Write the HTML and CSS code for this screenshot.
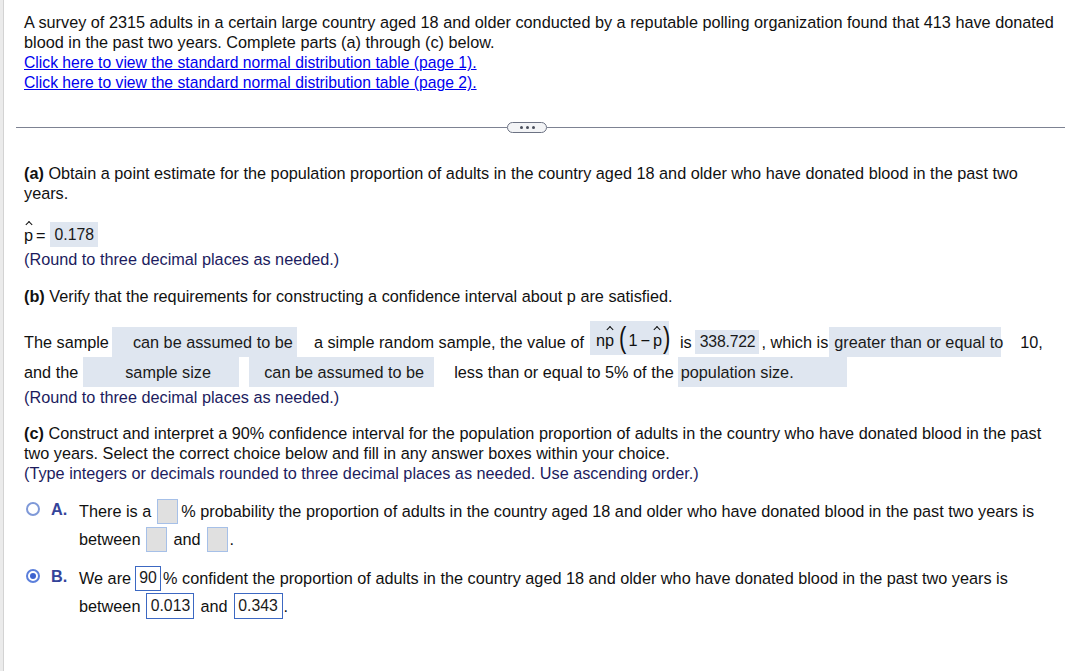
FILE: index.html
```html
<!DOCTYPE html>
<html>
<head>
<meta charset="utf-8">
<link rel="stylesheet" href="styles.css">
</head>
<body>
<div class="page">
  <div class="intro">
    <div class="line">A survey of 2315 adults in a certain large country aged 18 and older conducted by a reputable polling organization found that 413 have donated</div>
    <div class="line">blood in the past two years. Complete parts (a) through (c) below.</div>
    <div class="line"><a href="#">Click here to view the standard normal distribution table (page 1).</a></div>
    <div class="line"><a href="#">Click here to view the standard normal distribution table (page 2).</a></div>
  </div>

  <div class="divider">
    <div class="rule rule-left"></div>
    <div class="pill"><i></i><i></i><i></i></div>
    <div class="rule rule-right"></div>
  </div>

  <div class="part part-a">
    <div class="line"><b>(a)</b> Obtain a point estimate for the population proportion of adults in the country aged 18 and older who have donated blood in the past two</div>
    <div class="line">years.</div>
  </div>
  <div class="ans">
    <span class="hatp">p</span><span class="eq">=</span><span class="fill fill-phat">0.178</span>
  </div>
  <div class="line note note-a">(Round to three decimal places as needed.)</div>

  <div class="part part-b">
    <div class="line"><b>(b)</b> Verify that the requirements for constructing a confidence interval about p are satisfied.</div>
  </div>
  <div class="sentence">
    <div class="srow">
      <span>The sample</span>
      <span class="dd dd-1">can be assumed to be</span>
      <span class="t-1">a simple random sample, the value of</span>
      <span class="formula"><span>n</span><span class="hatp">p</span><span class="paren po">(</span><span>1</span><span class="minus">−</span><span class="hatp">p</span><span class="paren pc">)</span></span>
      <span class="t-is">is</span>
      <span class="fill fill-num">338.722</span>
      <span class="t-which">, which is</span>
      <span class="dd dd-3">greater than or equal to</span>
      <span class="t-10">10,</span>
    </div>
    <div class="srow">
      <span>and the</span>
      <span class="dd dd-4">sample size</span>
      <span class="dd dd-5">can be assumed to be</span>
      <span class="t-less">less than or equal to 5% of the</span>
      <span class="dd dd-6">population size.</span>
    </div>
  </div>
  <div class="line note">(Round to three decimal places as needed.)</div>

  <div class="part part-c">
    <div class="line"><b>(c)</b> Construct and interpret a 90% confidence interval for the population proportion of adults in the country who have donated blood in the past</div>
    <div class="line">two years. Select the correct choice below and fill in any answer boxes within your choice.</div>
    <div class="line note">(Type integers or decimals rounded to three decimal places as needed. Use ascending order.)</div>
  </div>

  <div class="option option-a">
    <span class="radio"></span>
    <span class="olabel">A.</span>
    <div class="otext">
      <div class="orow">There is a<span class="box box-empty box-a1"></span>% probability the proportion of adults in the country aged 18 and older who have donated blood in the past two years is</div>
      <div class="orow">between<span class="box box-empty box-a2"></span>and<span class="box box-empty box-a3"></span>.</div>
    </div>
  </div>

  <div class="option option-b">
    <span class="radio radio-on"></span>
    <span class="olabel">B.</span>
    <div class="otext">
      <div class="orow">We are<span class="box box-filled box-b1">90</span>% confident the proportion of adults in the country aged 18 and older who have donated blood in the past two years is</div>
      <div class="orow">between<span class="box box-filled box-b2">0.013</span>and<span class="box box-filled box-b3">0.343</span>.</div>
    </div>
  </div>
</div>
</body>
</html>
```

FILE: styles.css
```css
* { box-sizing: border-box; }
html, body { margin: 0; padding: 0; }
body {
  width: 1065px;
  height: 671px;
  overflow: hidden;
  font-family: "Liberation Sans", Arial, sans-serif;
  font-size: 16.25px;
  line-height: 20px;
  color: #111;
  background: linear-gradient(to right, #ebebeb 0, #ebebeb 3px, #d3d3d3 3px, #d3d3d3 4px, #ffffff 4px);
}
.page { padding: 12px 0 0 24px; }
.line { white-space: nowrap; height: 20px; }
.intro a { color: #0000ee; text-decoration: underline; font-size: 15.7px; }
b { font-weight: bold; }

.divider {
  margin: 29px 0 0 -8px;
  height: 12px;
  display: flex;
  align-items: center;
}
.rule { height: 1px; background: #7d8292; }
.rule-left { flex: 0 0 491px; }
.rule-right { flex: 1 1 auto; }
.pill {
  flex: 0 0 40px;
  height: 11px;
  border: 1px solid #6c7283;
  border-radius: 6px;
  background: #f3f4f6;
  display: flex;
  align-items: center;
  justify-content: center;
  gap: 3px;
}
.pill i { width: 3px; height: 3px; border-radius: 50%; background: #4a4f5c; }

.part-a { margin-top: 30px; }
.ans { margin-top: 19px; height: 25px; display: flex; align-items: center; white-space: nowrap; }
.eq { margin-left: 3px; }
.fill { background: #dfe6f0; color: #1a1a1a; display: inline-flex; align-items: center; }
.fill-phat { margin-left: 4px; height: 25px; padding: 0 4px 0 5px; font-size: 15.8px; }
.note { color: #1c1c5e; }
.note-a { margin-top: 2px; }
.part-b { margin-top: 17px; }

.hatp { position: relative; display: inline-block; }
.hatp::before {
  content: "";
  position: absolute;
  left: 50%;
  top: -3px;
  width: 4px;
  height: 4px;
  border-left: 1.2px solid currentColor;
  border-top: 1.2px solid currentColor;
  transform: translateX(-50%) rotate(45deg);
}

.sentence { margin-top: 21px; }
.srow { display: flex; align-items: center; height: 30px; white-space: nowrap; }
.dd { background: #dfe6f0; height: 30px; display: inline-flex; align-items: center; color: #1a1a1a; }
.dd-1 { margin-left: 3px; width: 185px; padding-left: 21px; }
.t-1 { margin-left: 17px; }
.formula {
  margin-left: 6px;
  background: #dfe6f0;
  height: 34px;
  width: 79px;
  margin-top: -8px;
  display: inline-flex;
  align-items: center;
  padding: 4px 0 0 6px;
}
.paren { font-size: 22px; line-height: 1; display: inline-block; transform: scaleY(1.3); margin-top: -3px; }
.po { margin: -3px 2px 0 5px; }
.pc { margin: -3px 0 0 1px; }
.minus { margin: 0 3px; }
.t-is { margin-left: 11px; }
.fill-num { margin-left: 3px; height: 24px; padding: 0 4px 0 5px; font-size: 15.8px; letter-spacing: -0.2px; }
.t-which { margin-left: 2px; }
.dd-3 { margin-left: 1px; padding: 0 3px 0 5px; width: 172px; }
.t-10 { margin-left: 19px; }
.dd-4 { margin-left: 5px; width: 156px; padding-left: 42px; }
.dd-5 { margin-left: 10px; width: 185px; padding-left: 15px; }
.t-less { margin-left: 20px; }
.dd-6 { margin-left: 4px; width: 169px; padding-left: 3px; }

.part-c { margin-top: 16px; }

.option { display: flex; align-items: flex-start; }
.option-a { margin-top: 14px; }
.option-b { margin-top: 11px; }
.radio {
  flex: 0 0 14px;
  width: 14px;
  height: 14px;
  margin: 5px 0 0 2px;
  border: 2px solid #7f99d8;
  border-radius: 50%;
  background: #fff;
  position: relative;
}
.radio-on { border-color: #5b7fdb; }
.radio-on::after {
  content: "";
  position: absolute;
  left: 2px;
  top: 2px;
  width: 6px;
  height: 6px;
  border-radius: 50%;
  background: #3d63cf;
}
.olabel { margin-left: 11px; width: 28px; font-weight: bold; color: #34449a; line-height: 20px; margin-top: 2px; }
.otext { display: flex; flex-direction: column; }
.orow { height: 28px; display: flex; align-items: center; white-space: nowrap; }
.box { display: inline-flex; align-items: center; justify-content: center; height: 25px; }
.box-empty { width: 21px; background: #e0e0e0; border: 1px solid #a6c0e8; }
.box-filled { background: #fff; border: 1px solid #3c68c2; padding: 0 2px; color: #1a1a1a; font-size: 15.8px; }
.box-a1 { margin: 0 3px 0 6px; }
.box-a2 { margin: 0 6px 0 6px; }
.box-a3 { margin: 0 2px 0 6px; }
.box-b1 { margin: 0 2px 0 4px; width: 26px; }
.box-b2 { margin: 0 6px 0 6px; width: 48px; height: 26px; }
.box-b3 { margin: 0 1px 0 6px; width: 49px; height: 26px; }
```
